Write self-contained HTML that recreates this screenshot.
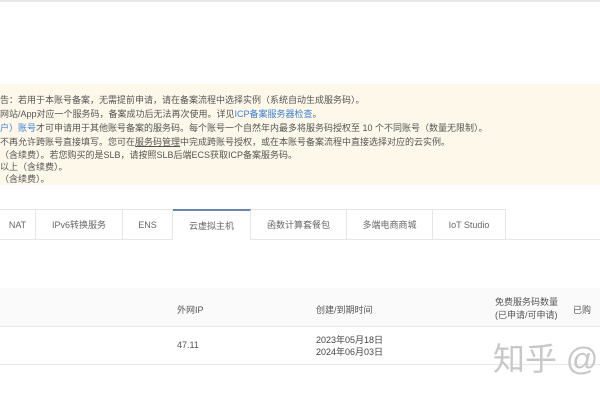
<html><head><style>
body{margin:0;width:600px;height:400px;background:#fff;font-family:"Liberation Sans","Noto Sans CJK SC",sans-serif;position:relative;overflow:hidden;color:#333}
.a{position:absolute;white-space:nowrap}
.n{left:0;top:84px;width:600px;height:101px;background:#fdf8ea}
.n div{position:absolute;left:0;font-size:9px;color:#555;white-space:nowrap}
.b{color:#3b7fd6}
.tab{position:absolute;top:209px;height:31px;border:1px solid #e6e6e6;border-left:none;font-size:9px;color:#666;text-align:center;line-height:31px;box-sizing:border-box;background:#fff;white-space:nowrap}
</style></head><body>
<div class="a" style="left:0;top:0;width:600px;height:2px;background:#e8e8e8"></div>
<div class="a n">
<div style="top:9px">告：若用于本账号备案，无需提前申请，请在备案流程中选择实例（系统自动生成服务码）。</div>
<div style="top:23px">网站/App对应一个服务码，备案成功后无法再次使用。详见<span class="b">ICP备案服务器检查</span>。</div>
<div style="top:37px"><span class="b">户）账号</span>才可申请用于其他账号备案的服务码。每个账号一个自然年内最多将服务码授权至 10 个不同账号（数量无限制）。</div>
<div style="top:51px">不再允许跨账号直接填写。您可在<u>服务码管理</u>中完成跨账号授权，或在本账号备案流程中直接选择对应的云实例。</div>
<div style="top:64px">（含续费）。若您购买的是SLB，请按照SLB后端ECS获取ICP备案服务码。</div>
<div style="top:76px">以上（含续费）。</div>
<div style="top:88px">（含续费）。</div>
</div>
<div class="a" style="left:0;top:239px;width:600px;height:1px;background:#e6e6e6"></div>
<div class="tab" style="left:0;width:36px">NAT</div>
<div class="tab" style="left:36px;width:87px">IPv6转换服务</div>
<div class="tab" style="left:123px;width:50px">ENS</div>
<div class="tab" style="left:173px;width:78px;border-top:2px solid #6a86a8;border-bottom:1px solid #fff;height:32px;line-height:30px">云虚拟主机</div>
<div class="tab" style="left:251px;width:96px">函数计算套餐包</div>
<div class="tab" style="left:347px;width:86px">多端电商商城</div>
<div class="tab" style="left:433px;width:73px">IoT Studio</div>
<div class="a" style="left:0;top:288px;width:600px;height:38px;background:#fafafa;border-bottom:1px solid #e8e8e8"></div>
<div class="a" style="left:177px;top:303px;font-size:9px;color:#555">外网IP</div>
<div class="a" style="left:316px;top:303px;font-size:9px;color:#555">创建/到期时间</div>
<div class="a" style="left:495px;top:296px;font-size:9px;color:#555;line-height:13px">免费服务码数量<br>(已申请/可申请)</div>
<div class="a" style="left:573px;top:303px;font-size:9px;color:#555">已购</div>
<div class="a" style="left:0;top:364px;width:600px;height:1px;background:#e8e8e8"></div>
<div class="a" style="left:177px;top:340px;font-size:9px;color:#555">47.11</div>
<div class="a" style="left:316px;top:334px;font-size:9px;color:#444;line-height:12px">2023年05月18日<br>2024年06月03日</div>
<div class="a" style="left:493px;top:334px;font-size:32px;color:#c8c8c8">知乎 @</div>
</body></html>
